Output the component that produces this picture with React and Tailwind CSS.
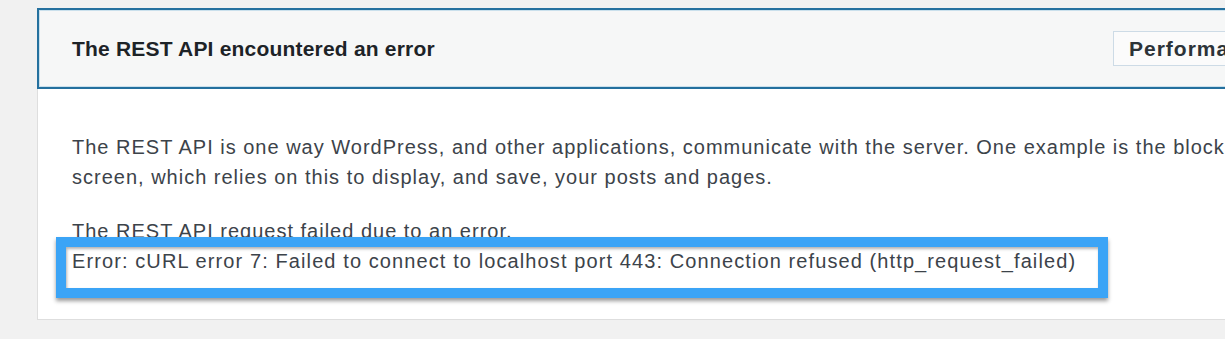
import React from 'react';

const sans = { fontFamily: '"Liberation Sans", Arial, sans-serif' };

function Header() {
  return (
    <div className="h-[81px] flex items-center border-2 border-[#24709e] bg-[#f6f7f7] shadow-[inset_0_0_0_1px_rgba(120,180,215,0.35)] -ml-px -mt-px">
      <div className="w-[1074px] shrink-0 pl-[33px]">
        <h2 className="text-[21px] font-bold tracking-[0.2px] text-[#1d2327] leading-none">
          The REST API encountered an error
        </h2>
      </div>
      <span className="shrink-0 h-[35px] flex items-center px-[15px] border border-[#cddbe6] bg-[#fbfbfb] text-[21px] font-bold tracking-[1px] text-[#2c3338] leading-none">
        Performance
      </span>
    </div>
  );
}

export default function App() {
  return (
    <div className="w-screen h-[339px] overflow-hidden bg-[#f1f1f1] pt-[8px]" style={sans}>
      <div className="ml-[37px] w-[1400px] bg-white border border-[#dedede]">
        <Header />

        <div className="pl-[34px] pt-[43px] pb-[43px] text-[20px] leading-[30px] tracking-[1px] text-[#3c434a]">
          <p className="whitespace-nowrap">
            The REST API is one way WordPress, and other applications, communicate with the server. One example is the block editor
            <br />
            screen, which relies on this to display, and save, your posts and pages.
          </p>

          <p className="mt-[24px] whitespace-nowrap">The REST API request failed due to an error.</p>

          {/* error line with the highlight box drawn over it */}
          <div className="relative whitespace-nowrap tracking-[1.1px]">
            Error: cURL error 7: Failed to connect to localhost port 443: Connection refused (http_request_failed)
            <div className="absolute -top-[9px] -left-[16px] w-[1052px] h-[61px] border-[10px] border-[#3ba4f6] shadow-[0_3px_4px_rgba(0,0,0,0.4),inset_1px_2px_3px_rgba(0,0,0,0.3)] pointer-events-none" />
          </div>
        </div>
      </div>
    </div>
  );
}
